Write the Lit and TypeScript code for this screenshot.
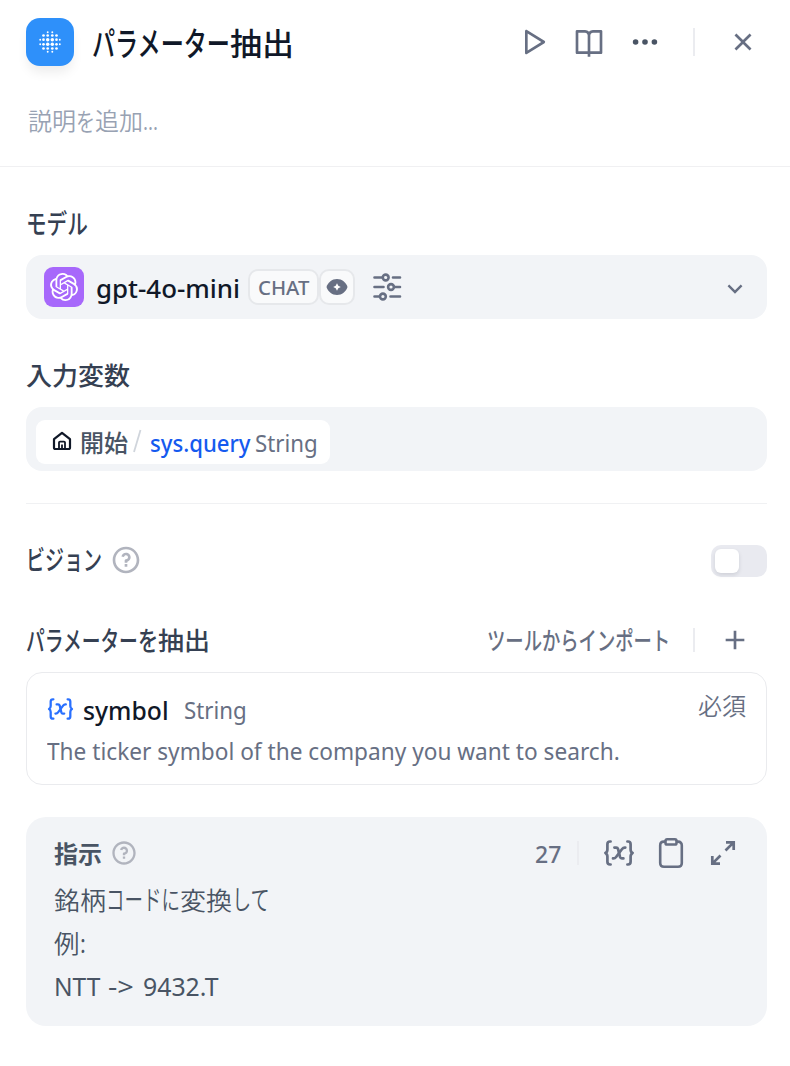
import { LitElement, html, css, svg } from "lit";
import { customElement, property } from "lit/decorators.js";
import { classMap } from "lit/directives/class-map.js";

/** A run of text condensed or widened to an exact advance width. */
@customElement("fit-text")
class FitText extends LitElement {
  @property() text = "";
  @property({ type: Number }) w = 0;

  static styles = css`
    :host { display: block; flex: none; white-space: pre; }
    .run { display: inline-block; vertical-align: top; transform-origin: 0 50%; }
    .kana { font-size: 1.07em; }
  `;

  updated() {
    const run = this.renderRoot.querySelector(".run") as HTMLElement;
    this.style.width = `${this.w}px`;
    const natural = run.offsetWidth;
    if (natural && this.w) run.style.transform = `scaleX(${this.w / natural})`;
  }

  render() {
    const kana = /^[\u3040-\u30ff]+$/.test(this.text);
    return html`<span class=${classMap({ run: true, kana })}>${this.text}</span>`;
  }
}

type Run = [string, number];
const runs = (cls: string, list: Run[]) =>
  html`<div class="runs ${cls}">${list.map(([t, w]) => html`<fit-text .text=${t} .w=${w}></fit-text>`)}</div>`;

const icon = (size: number, path: string) =>
  html`<svg class="icon" width=${size} height=${size} viewBox="0 0 24 24" fill="currentColor"><path d=${path} /></svg>`;

const PLAY = "M8 18.3915V5.60846L18.2264 12L8 18.3915ZM6 3.80421V20.1957C6 20.9812 6.86395 21.46 7.53 21.0437L20.6432 12.848C21.2699 12.4563 21.2699 11.5436 20.6432 11.152L7.53 2.95621C6.86395 2.53993 6 3.01878 6 3.80421Z";
const BOOK = "M13 21V23H11V21H3C2.44772 21 2 20.5523 2 20V4C2 3.44772 2.44772 3 3 3H9C10.1947 3 11.2671 3.52375 12 4.35418C12.7329 3.52375 13.8053 3 15 3H21C21.5523 3 22 3.44772 22 4V20C22 20.5523 21.5523 21 21 21H13ZM20 19V5H15C13.8954 5 13 5.89543 13 7V19H20ZM11 19V7C11 5.89543 10.1046 5 9 5H4V19H11Z";
const CLOSE = "M12 10.5858L16.9497 5.63604L18.364 7.05025L13.4142 12L18.364 16.9497L16.9497 18.364L12 13.4142L7.05025 18.364L5.63604 16.9497L10.5858 12L5.63604 7.05025L7.05025 5.63604L12 10.5858Z";
const ADD = "M11 11V5H13V11H19V13H13V19H11V13H5V11H11Z";
const HELP = "M12 22C6.47715 22 2 17.5228 2 12C2 6.47715 6.47715 2 12 2C17.5228 2 22 6.47715 22 12C22 17.5228 17.5228 22 12 22ZM12 20C16.4183 20 20 16.4183 20 12C20 7.58172 16.4183 4 12 4C7.58172 4 4 7.58172 4 12C4 16.4183 7.58172 20 12 20ZM11 15H13V17H11V15ZM13 13.3551V14H11V12.5C11 11.9477 11.4477 11.5 12 11.5C12.8284 11.5 13.5 10.8284 13.5 10C13.5 9.17157 12.8284 8.5 12 8.5C11.2723 8.5 10.6656 9.01823 10.5288 9.70577L8.56731 9.31346C8.88637 7.70919 10.302 6.5 12 6.5C13.933 6.5 15.5 8.067 15.5 10C15.5 11.5855 14.4457 12.9248 13 13.3551Z";
const DOWN = "M11.9999 13.1714L16.9497 8.22168L18.3639 9.63589L11.9999 15.9999L5.63599 9.63589L7.0502 8.22168L11.9999 13.1714Z";
const OPENAI = "M22.2819 9.8211a5.9847 5.9847 0 0 0-.5157-4.9108 6.0462 6.0462 0 0 0-6.5098-2.9A6.0651 6.0651 0 0 0 4.9807 4.1818a5.9847 5.9847 0 0 0-3.9977 2.9 6.0462 6.0462 0 0 0 .7427 7.0966 5.98 5.98 0 0 0 .511 4.9107 6.051 6.051 0 0 0 6.5146 2.9001A5.9847 5.9847 0 0 0 13.2599 24a6.0557 6.0557 0 0 0 5.7718-4.2058 5.9894 5.9894 0 0 0 3.9977-2.9001 6.0557 6.0557 0 0 0-.7475-7.0729zm-9.022 12.6081a4.4755 4.4755 0 0 1-2.8764-1.0408l.1419-.0804 4.7783-2.7582a.7948.7948 0 0 0 .3927-.6813v-6.7369l2.02 1.1686a.071.071 0 0 1 .038.052v5.5826a4.504 4.504 0 0 1-4.4945 4.4944zm-9.6607-4.1254a4.4708 4.4708 0 0 1-.5346-3.0137l.142.0852 4.783 2.7582a.7712.7712 0 0 0 .7806 0l5.8428-3.3685v2.3324a.0804.0804 0 0 1-.0332.0615L9.74 19.9502a4.4992 4.4992 0 0 1-6.1408-1.6464zM2.3408 7.8956a4.485 4.485 0 0 1 2.3655-1.9728V11.6a.7664.7664 0 0 0 .3879.6765l5.8144 3.3543-2.0201 1.1685a.0757.0757 0 0 1-.071 0l-4.8303-2.7865A4.504 4.504 0 0 1 2.3408 7.872zm16.5963 3.8558L13.1038 8.364 15.1192 7.2a.0757.0757 0 0 1 .071 0l4.8303 2.7913a4.4944 4.4944 0 0 1-.6765 8.1042v-5.6772a.79.79 0 0 0-.407-.667zm2.0107-3.0231l-.142-.0852-4.7735-2.7818a.7759.7759 0 0 0-.7854 0L9.409 9.2297V6.8974a.0662.0662 0 0 1 .0284-.0615l4.8303-2.7866a4.4992 4.4992 0 0 1 6.6802 4.66zM8.3065 12.863l-2.02-1.1638a.0804.0804 0 0 1-.038-.0567V6.0742a4.4992 4.4992 0 0 1 7.3757-3.4537l-.142.0805L8.704 5.459a.7948.7948 0 0 0-.3927.6813zm1.0976-2.3654l2.602-1.4998 2.6069 1.4998v2.9994l-2.5974 1.4997-2.6067-1.4997Z";

const AXIS = [-9.8, -6.5, -2.3, 2.3, 6.5, 9.8];
const dotGrid = AXIS.flatMap((y, r) =>
  AXIS.map((x, c) => {
    const dx = Math.abs(c - 2.5);
    const dy = Math.abs(r - 2.5);
    if (dx + dy > 3.1) return null;
    const ring = Math.max(dx, dy);
    const radius = ring < 1 ? 1.75 : ring < 2 ? 1.35 : 0.95;
    return svg`<circle cx=${x} cy=${y} r=${radius} />`;
  })
);

const variableIcon = (w: number, h: number) => html`
  <svg class="icon" width=${w} height=${h} viewBox="0 0 30 26" fill="none" stroke="currentColor"
    stroke-width="2.7" stroke-linecap="round" stroke-linejoin="round">
    <path d="M6.6 1.5H6C4.3 1.5 3.4 2.4 3.4 4.2V9.4C3.4 11.2 2.8 12.3 1.4 13C2.8 13.7 3.4 14.8 3.4 16.6V21.8C3.4 23.6 4.3 24.5 6 24.5H6.6" />
    <path d="M23.4 1.5H24C25.7 1.5 26.6 2.4 26.6 4.2V9.4C26.6 11.2 27.2 12.3 28.6 13C27.2 13.7 26.6 14.8 26.6 16.6V21.8C26.6 23.6 25.7 24.5 24 24.5H23.4" />
    <path d="M10.4 7.6H12.2C13.3 7.6 13.8 8.1 14.1 9.1L16 16.9C16.3 17.9 16.8 18.4 17.8 18.4H19.4" />
    <path d="M21.3 7.6H20.7C19.5 7.6 18.8 8.1 18.1 9L12.1 17C11.4 17.9 10.7 18.4 9.5 18.4H9" />
  </svg>`;

@customElement("app-root")
class AppRoot extends LitElement {
  static styles = css`
    :host {
      display: block;
      box-sizing: border-box;
      height: 1066px;
      background: #fff;
      color: #676f83;
      font-family: "Noto Sans", "Noto Sans CJK JP", sans-serif;
      font-size: 24px;
    }
    * { box-sizing: border-box; }
    .icon { display: block; flex: none; }
    .runs { display: flex; flex: none; font-family: "Noto Sans CJK JP", sans-serif; line-height: 36px; height: 36px; }
    .latin { font-family: "Noto Sans", sans-serif; }
    .grow { flex: 1; }
    .row { display: flex; align-items: center; }

    header { height: 167px; border-bottom: 1px solid #f0f0f2; padding: 18px 31px 0 26px; }
    .bar { height: 48px; }
    .actions { display: flex; align-items: center; gap: 24px; }
    .logo { width: 48px; height: 48px; border-radius: 14px; background: #2e90fa; box-shadow: 0 8px 12px -2px rgba(9, 9, 11, .08); display: grid; place-items: center; }
    .title { font-size: 31px; font-weight: 500; color: #101828; margin-left: 18px; line-height: 48px; height: 48px; }
    .rule { width: 2px; height: 24px; background: #ebecf0; }
    .tall { height: 28px; margin: 0 32px; }
    .desc { font-size: 23.5px; font-weight: 350; color: #98a2b3; margin: 36px 0 0 2px; }

    main { padding: 0 23px 0 26px; display: flex; flex-direction: column; }
    .heading { font-size: 25.5px; font-weight: 500; color: #354052; }
    .field { height: 64px; border-radius: 16px; background: #f2f4f7; }
    .model-h { margin-top: 37px; }
    .model { margin-top: 15px; padding: 0 18px 0 18px; }
    .provider { width: 40px; height: 40px; border-radius: 9px; background: #a768fb; display: grid; place-items: center; color: #fff; }
    .model-name { margin: 2px 0 0 12px; font-size: 25px; font-weight: 500; color: #101828; }
    .badge { height: 36px; border: 2px solid #e6e8eb; border-radius: 10px; background: #f9fafb; display: grid; place-items: center; }
    .chat { width: 71px; margin-left: 8px; font-size: 19.5px; font-weight: 500; }
    .chat .runs { line-height: 34px; height: 32px; }
    .eye { width: 36px; }
    .sliders { margin-left: 17px; }
    .down { margin-top: 3px; }
    .input-h { margin-top: 37px; }
    .input { margin-top: 15px; padding: 6px 0 0 10px; display: flex; align-items: center; }
    .chip { height: 44px; width: 294px; border-radius: 9px; background: #fff; padding-left: 16px; color: #101828; }
    .chip .home { margin-bottom: 2px; }
    .node { margin: 0 0 1px 8px; color: #495464; font-weight: 500; }
    .slash { margin: 0 8px 2px 4px; }
    .var { color: #155aef; font-weight: 500; font-size: 23px; }
    .type { font-size: 23px; color: #676f83; }
    .chip .type { margin-left: 4px; }
    .chip .latin { margin-top: 2px; }
    .split { height: 1px; background: #f0f1f3; margin-top: 32px; }
    .vision { height: 32px; margin-top: 41px; }
    .vision .heading { margin-bottom: 6px; }
    .help { color: #b1b4be; }
    .vision .help { margin: 0 0 2px 8px; }
    .toggle { width: 56px; height: 32px; border-radius: 10px; background: #e9eaf0; padding: 4px; }
    .knob { width: 24px; height: 24px; border-radius: 6px; background: #fff; box-shadow: 0 2px 4px rgba(16, 24, 40, .12); }
    .extract { height: 36px; margin-top: 45px; padding-right: 16px; }
    .extract .heading { margin-bottom: 2px; }
    .extract .rule { margin: 0 24px 0 23px; }
    .import { font-weight: 500; font-size: 23.5px; margin-bottom: 2px; }
    .card { height: 113px; margin-top: 14px; border: 1px solid #eaebee; border-radius: 16px; padding: 16px 20px 0; }
    .card .variable { color: #2970ff; margin-bottom: 3px; }
    .name { font-weight: 500; font-size: 25px; color: #101828; margin-left: 9px; }
    .card .type { margin-left: 15px; }
    .card .row { height: 42px; }
    .required { font-weight: 350; font-size: 23.5px; height: 46px; }
    .about { font-size: 23px; margin-top: 2px; }
    .prompt { height: 209px; margin-top: 32px; border-radius: 20px; background: #f2f4f7; padding: 18px 31px 0 28px; }
    .prompt .row { height: 36px; }
    .label { font-weight: 700; font-size: 23.5px; color: #495464; }
    .prompt .help { margin-left: 8px; }
    .prompt .rule { margin: 0 25px 0 16px; }
    .prompt .tools { display: flex; align-items: center; gap: 24px; }
    .expand { margin-left: 2px; }
    .count { font-weight: 500; font-size: 23px; margin-top: 2px; }
    .lines { margin-top: 6px; }
    .line { font-size: 25.5px; font-weight: 350; color: #495464; height: 43px; line-height: 43px; }
    .ascii { font-size: 24.5px; font-weight: 400; margin-top: 2px; }
  `;

  render() {
    return html`
      <header>
        <div class="row bar">
          <div class="logo">
            <svg class="icon" width="24" height="24" viewBox="-12 -12 24 24" fill="#fff">${dotGrid}</svg>
          </div>
          ${runs("title", [["パラメーター", 138], ["抽出", 64]])}
          <div class="grow"></div>
          <div class="actions">
            ${icon(32, PLAY)}
            ${icon(32, BOOK)}
            <svg class="icon" width="32" height="32" viewBox="-16 -16 32 32" fill="#495464">
              <circle cx="-9.4" r="2.8" /><circle r="2.8" /><circle cx="9.4" r="2.8" />
            </svg>
          </div>
          <div class="rule tall"></div>
          ${icon(32, CLOSE)}
        </div>
        ${runs("desc", [["説明", 48], ["を", 19], ["追加", 48], ["...", 15]])}
      </header>
      <main>
        ${runs("heading model-h", [["モデル", 62]])}
        <div class="field model row">
          <div class="provider">${icon(28, OPENAI)}</div>
          ${runs("latin model-name", [["gpt-4o-mini", 144]])}
          <div class="badge chat">${runs("latin", [["CHAT", 51]])}</div>
          <div class="badge eye">
            <svg class="icon" width="22" height="16" viewBox="0 0 22 16">
              <path fill="#676f83" d="M11 0C16 0 20 3.4 21.5 8C20 12.6 16 16 11 16S2 12.6.5 8C2 3.4 6 0 11 0Z" />
              <path fill="#fff" d="M11 4.2L12.3 6.7L14.8 8L12.3 9.3L11 11.8L9.7 9.3L7.2 8L9.7 6.7Z" />
            </svg>
          </div>
          <svg class="icon sliders" width="30" height="28" viewBox="0 0 30 28" fill="none" stroke="#676f83" stroke-width="2.6" stroke-linecap="round">
            <path d="M2.5 4.5H10M21 4.5H28M2.5 14H11.5M23 14H28M2.5 23.5H7M18.5 23.5H28" />
            <circle cx="13.7" cy="4.5" r="2.9" /><circle cx="19" cy="14" r="2.9" /><circle cx="10.9" cy="23.5" r="2.9" />
          </svg>
          <div class="grow"></div>
          <div class="down">${icon(28, DOWN)}</div>
        </div>
        ${runs("heading input-h", [["入力変数", 104]])}
        <div class="field input">
          <div class="row chip">
            <svg class="icon home" width="20" height="20" viewBox="0 0 20 20" fill="none" stroke="currentColor" stroke-width="2.2" stroke-linejoin="round">
              <path d="M2 8.2L10 1.8L18 8.2V16.4Q18 18 16.4 18H3.6Q2 18 2 16.4Z" />
              <path d="M7 18V11.6Q7 10.6 8 10.6H12Q13 10.6 13 11.6V18M10 13.5V18" stroke-width="1.8" />
            </svg>
            ${runs("node", [["開始", 48]])}
            <svg class="icon slash" width="10" height="24" viewBox="0 0 10 24" stroke="#d0d5dc" stroke-width="1.8"><path d="M8.5 1L2 23" /></svg>
            ${runs("latin var", [["sys.query", 101]])}
            ${runs("latin type", [["String", 63]])}
          </div>
        </div>
        <div class="split"></div>
        <div class="row vision">
          ${runs("heading", [["ビジョン", 76]])}
          <div class="help">${icon(32, HELP)}</div>
          <div class="grow"></div>
          <div class="toggle"><div class="knob"></div></div>
        </div>
        <div class="row extract">
          ${runs("heading", [["パラメーター", 112], ["を", 20], ["抽出", 52]])}
          <div class="grow"></div>
          ${runs("import", [["ツールからインポート", 183]])}
          <div class="rule"></div>
          ${icon(32, ADD)}
        </div>
        <div class="card">
          <div class="row">
            <div class="variable">${variableIcon(27, 22)}</div>
            ${runs("latin name", [["symbol", 86]])}
            ${runs("latin type", [["String", 63]])}
            <div class="grow"></div>
            ${runs("required", [["必須", 48]])}
          </div>
          ${runs("latin about", [["The ticker symbol of the company you want to search.", 573]])}
        </div>
        <div class="prompt">
          <div class="row">
            ${runs("label", [["指示", 48]])}
            <div class="help">${icon(28, HELP)}</div>
            <div class="grow"></div>
            ${runs("latin count", [["27", 26]])}
            <div class="rule"></div>
            <div class="tools">
              ${variableIcon(30, 26)}
              <svg class="icon" width="26" height="32" viewBox="0 0 26 32" fill="none" stroke="currentColor" stroke-width="2.6">
                <path d="M7 4.6H6Q2.2 4.6 2.2 8.4V26Q2.2 29.8 6 29.8H20Q23.8 29.8 23.8 26V8.4Q23.8 4.6 20 4.6H19" />
                <rect x="7.5" y="2.3" width="11" height="5.2" rx="1.6" />
              </svg>
              <svg class="icon expand" width="26" height="26" viewBox="0 0 26 26" fill="none" stroke="currentColor" stroke-width="2.7">
                <path d="M16 2.3H23.7V10M23.4 2.6L15.5 10.5M10 23.7H2.3V16M2.6 23.4L10.5 15.5" />
              </svg>
            </div>
          </div>
          <div class="lines">
            ${runs("line", [["銘柄", 52], ["コードに", 74], ["変換", 52], ["して", 38]])}
            ${runs("line", [["例", 26], [":", 6]])}
            ${runs("latin line ascii", [["NTT", 46], [" ", 8], ["->", 26], [" ", 9], ["9432.T", 76]])}
          </div>
        </div>
      </main>
    `;
  }
}
